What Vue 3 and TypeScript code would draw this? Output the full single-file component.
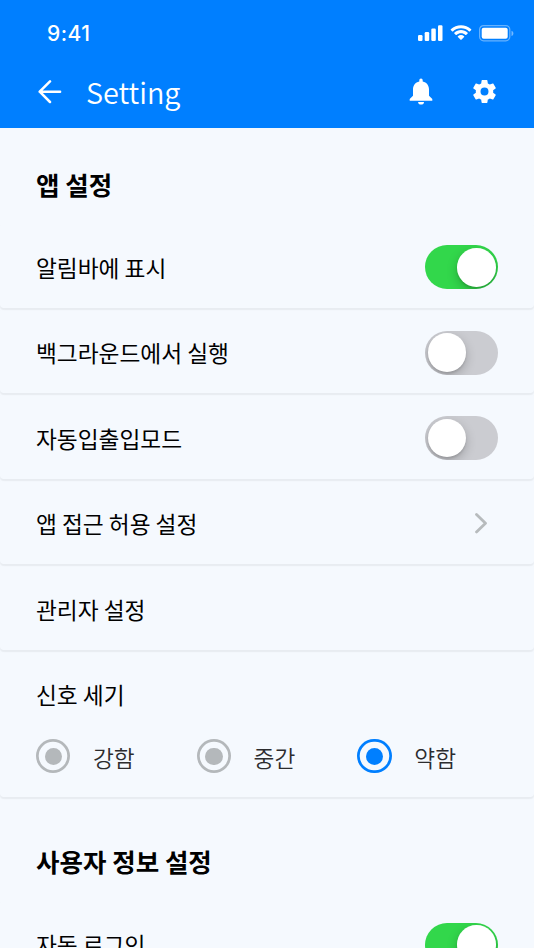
<script setup lang="ts">
import { reactive, ref } from 'vue'

interface Row {
  label: string
  kind: 'toggle' | 'link' | 'plain'
  on?: boolean
}

const rows = reactive<Row[]>([
  { label: '알림바에 표시', kind: 'toggle', on: true },
  { label: '백그라운드에서 실행', kind: 'toggle', on: false },
  { label: '자동입출입모드', kind: 'toggle', on: false },
  { label: '앱 접근 허용 설정', kind: 'link' },
  { label: '관리자 설정', kind: 'plain' },
])

const levels = ['강함', '중간', '약함']
const level = ref('약함')
const autoLogin = ref(true)
</script>

<template>
  <div class="screen">
    <header class="header">
      <div class="status">
        <span class="time">9:41</span>
        <div class="indicators">
          <svg class="signal" width="25" height="16" viewBox="0 0 25 16" fill="#fff">
            <rect x="0" y="10" width="4.5" height="6" rx="1.2" />
            <rect x="6.7" y="7" width="4.5" height="9" rx="1.2" />
            <rect x="13.3" y="3.5" width="4.5" height="12.5" rx="1.2" />
            <rect x="20" y="0.3" width="4.5" height="15.7" rx="1.2" />
          </svg>
          <svg class="wifi" width="22" height="16" viewBox="0 0 22 16" fill="#fff">
            <path d="M11 3.2C14 3.2 16.9 4.4 19.1 6.4Q19.4 6.7 19.7 6.4L21.2 4.9Q21.5 4.5 21.2 4.2C15.500-1.100 6.500-1.100.8 4.200Q.5 4.500.8 4.900L2.300 6.400Q2.600 6.700 2.900 6.400C5.100 4.400 8 3.200 11 3.200Z" />
            <path d="M11 8.200C12.700 8.200 14.300 8.800 15.500 9.900Q15.800 10.200 16.100 9.900L17.700 8.400Q18 8 17.700 7.700C13.900 4.200 8.100 4.200 4.300 7.700Q4 8 4.300 8.400L5.900 9.900Q6.200 10.200 6.500 9.900C7.700 8.800 9.300 8.200 11 8.200Z" />
            <path d="M14.100 11.900Q14.400 11.500 14.100 11.200C12.300 9.700 9.700 9.700 7.900 11.200Q7.600 11.500 7.900 11.900L10.600 14.700Q11 15 11.400 14.700Z" />
          </svg>
          <svg class="battery" width="35" height="17" viewBox="0 0 35 17">
            <rect x=".6" y=".6" width="30.2" height="15.200" rx="4" fill="none" stroke="#fff" stroke-opacity=".4" stroke-width="1.200" />
            <rect x="2.700" y="2.700" width="26" height="11" rx="2" fill="#fff" />
            <path d="M32.500 5.700v5.400c1.200-.5 1.900-1.500 1.900-2.700s-.7-2.200-1.900-2.700Z" fill="#fff" fill-opacity=".45" />
          </svg>
        </div>
      </div>
      <div class="toolbar">
        <svg class="back" width="24" height="24" viewBox="0 0 24 24" fill="none" stroke="#fff" stroke-width="2.500" stroke-linecap="round" stroke-linejoin="round">
          <path d="M22.100 11.700H1.700M12 1.400 1.700 11.700 12 22" />
        </svg>
        <h1 class="title">Setting</h1>
        <svg class="bell" width="24" height="27" viewBox="0 0 24 27" fill="#fff">
          <path d="M12 .6c-1.100 0-1.700.8-1.700 2v.8C6.300 4.200 4 7.400 4 11.500v6.200L.7 21v1.700h22.600V21L20 17.700v-6.200c0-4.100-2.300-7.300-6.300-8.100v-.8c0-1.200-.6-2-1.700-2ZM9.100 23.900h5.900c0 1.700-1.300 2.700-2.900 2.700s-3-1-3-2.700Z" />
        </svg>
        <svg class="gear" width="29" height="29" viewBox="0 0 24 24" fill="#fff">
          <path d="M19.140 12.940c.04-.3.06-.61.06-.94 0-.32-.02-.64-.07-.94l2.030-1.580c.18-.14.23-.41.12-.61l-1.920-3.320c-.12-.22-.37-.29-.59-.22l-2.390.96c-.5-.38-1.030-.7-1.620-.94l-.36-2.540c-.04-.24-.24-.41-.48-.41h-3.840c-.24 0-.43.17-.47.41l-.36 2.540c-.59.24-1.130.57-1.620.94l-2.390-.96c-.22-.08-.47 0-.59.22L2.740 8.870c-.12.21-.08.47.12.61l2.030 1.580c-.05.3-.09.63-.09.94s.02.64.07.94l-2.030 1.580c-.18.14-.23.41-.12.61l1.920 3.320c.12.22.37.29.59.22l2.390-.96c.5.38 1.030.7 1.620.94l.36 2.540c.05.24.24.41.48.41h3.840c.24 0 .44-.17.47-.41l.36-2.540c.59-.24 1.130-.56 1.620-.94l2.390.96c.22.08.47 0 .59-.22l1.920-3.320c.12-.22.07-.47-.12-.61l-2.010-1.580ZM12 15.300a3.300 3.300 0 1 1 0-6.600 3.300 3.300 0 0 1 0 6.600Z" />
        </svg>
      </div>
    </header>

    <main class="content">
      <h2 class="heading">앱 설정</h2>
      <div v-for="row in rows" :key="row.label" class="row">
        <span class="label">{{ row.label }}</span>
        <button v-if="row.kind === 'toggle'" type="button" class="switch" :class="{ on: row.on }" @click="row.on = !row.on">
          <span class="knob"></span>
        </button>
        <svg v-else-if="row.kind === 'link'" class="chevron" width="14" height="22" viewBox="0 0 14 22" fill="none" stroke="#b7bbbd" stroke-width="2.800" stroke-linecap="round" stroke-linejoin="round">
          <path d="m2.500 1.500 9 8.700-9 8.700" />
        </svg>
      </div>
      <section class="strength">
        <div class="label">신호 세기</div>
        <div class="options">
          <div v-for="item in levels" :key="item" class="option" :class="{ selected: item === level }" @click="level = item">
            <span class="radio"></span>
            <span class="option-text">{{ item }}</span>
          </div>
        </div>
      </section>

      <h2 class="heading second">사용자 정보 설정</h2>
      <div class="row">
        <span class="label">자동 로그인</span>
        <button type="button" class="switch" :class="{ on: autoLogin }" @click="autoLogin = !autoLogin">
          <span class="knob"></span>
        </button>
      </div>
    </main>
  </div>
</template>

<style>
body {
  margin: 0;
  background: #fff;
}
</style>

<style scoped>
.screen {
  width: 534px;
  height: 948.4px;
  overflow: hidden;
  background: #f5f9fe;
  color: #000;
  font-family: 'Noto Sans CJK KR', sans-serif;
  display: flex;
  flex-direction: column;
}
.header {
  flex: none;
  height: 128.2px;
  background: #007fff;
  color: #fff;
}
.status {
  height: 63px;
  padding: 3px 20px 0 47px;
  box-sizing: border-box;
  display: flex;
  align-items: center;
  justify-content: space-between;
}
.time {
  padding-top: 1px;
  font: 500 21px/24px Inter, sans-serif;
  letter-spacing: 0.5px;
}
.indicators {
  display: flex;
  gap: 7px;
}
.toolbar {
  height: 57px;
  padding: 0 35.5px 0 38px;
  display: flex;
  align-items: center;
}
.title {
  margin: 0 auto 0 24px;
  font-size: 28.8px;
  line-height: 40px;
  font-weight: 350;
}
.bell {
  margin-right: 36.5px;
}
.content {
  flex: none;
}
.heading {
  margin: 0;
  height: 94.4px;
  padding: 36.5px 36px 0;
  box-sizing: border-box;
  font-size: 25.5px;
  line-height: 37px;
  font-weight: 700;
}
.second {
  height: 102.7px;
  padding-top: 45px;
}
.row,
.strength {
  box-sizing: border-box;
  border-radius: 4px;
  box-shadow: 0 1.2px 1.2px rgba(0, 0, 0, 0.055);
}
.row {
  height: 85.44px;
  padding: 4px 36px 0;
  display: flex;
  align-items: center;
  justify-content: space-between;
}
.label {
  font-size: 22.7px;
  line-height: 33px;
}
.switch {
  width: 73px;
  height: 44px;
  padding: 0 2.500px;
  border: 0;
  border-radius: 22px;
  overflow: hidden;
  background: #cbccd1;
  display: flex;
  align-items: center;
}
.knob {
  width: 38.5px;
  height: 38.5px;
  border-radius: 50%;
  background: #fff;
  box-shadow: 0 4px 11px rgba(0, 0, 0, 0.22), 0 2px 2px rgba(0, 0, 0, 0.1);
}
.on {
  background: #32d74b;
  justify-content: flex-end;
}
.chevron {
  margin-right: 10px;
}
.strength {
  height: 147.5px;
  padding: 28px 36px 0;
}
.options {
  margin-top: 28.5px;
  display: flex;
}
.option {
  flex: none;
  width: 160.7px;
  height: 34px;
  display: flex;
  align-items: center;
  gap: 22.5px;
}
.option:last-child {
  width: auto;
}
.radio {
  width: 34.4px;
  height: 34.4px;
  box-sizing: border-box;
  border-radius: 50%;
  box-shadow: inset 0 0 0 2.7px #b4b8bb;
  display: grid;
  place-items: center;
}
.radio::after {
  content: '';
  width: 17.4px;
  height: 17.4px;
  border-radius: 50%;
  background: #b4b8bb;
}
.selected .radio {
  box-shadow: inset 0 0 0 2.7px #007fff;
}
.selected .radio::after {
  background: #007fff;
}
.option-text {
  padding-top: 3px;
  font-size: 22.7px;
  line-height: 34px;
  font-weight: 350;
  color: #2c2c2e;
}
</style>
